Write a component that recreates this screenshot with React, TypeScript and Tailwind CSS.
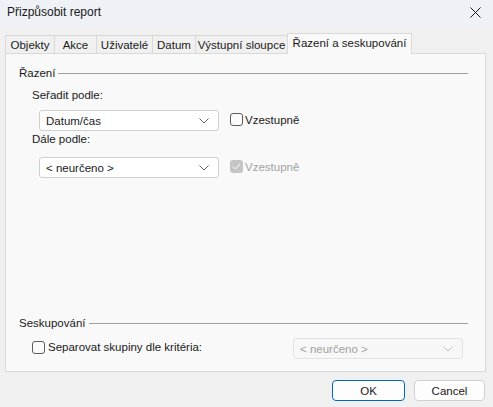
import React from "react";

const Chevron = ({ color = "#606060" }: { color?: string }) => (
  <svg width="10" height="6" viewBox="0 0 10 6" fill="none">
    <path d="M0.5 0.5 L5 5 L9.5 0.5" stroke={color} strokeWidth="1" />
  </svg>
);

const Combo = ({ text, disabled = false, w }: { text: string; disabled?: boolean; w: string }) => (
  <div
    className={`${w} h-[21px] flex items-center justify-between pl-[6px] pr-[9px] rounded-[3px] border ${
      disabled ? "border-[#e2e2e2] bg-[#f7f7f7] text-[#a2a2a2]" : "border-[#cfcfcf] bg-white text-[#1a1a1a]"
    }`}
  >
    <span className="whitespace-nowrap">{text}</span>
    <Chevron color={disabled ? "#c0c0c0" : "#606060"} />
  </div>
);

const Check = ({ checked = false, disabled = false }: { checked?: boolean; disabled?: boolean }) =>
  checked && disabled ? (
    <div className="w-[13px] h-[13px] rounded-[3px] bg-[#c4c4c4] flex items-center justify-center shrink-0">
      <svg width="9" height="7" viewBox="0 0 9 7" fill="none">
        <path d="M1 3.5 L3.5 6 L8 1" stroke="#ffffff" strokeWidth="1" />
      </svg>
    </div>
  ) : (
    <div className="w-[13px] h-[13px] rounded-[3px] border border-[#5c5c5c] bg-[#fafafa] shrink-0" />
  );

const Tab = ({ label, w }: { label: string; w: string }) => (
  <div
    className={`${w} h-[18px] border-t border-l border-[#d9d9d9] bg-[#f0f0f0] flex items-center justify-center text-[#1a1a1a] whitespace-nowrap shrink-0`}
  >
    {label}
  </div>
);

export default function App() {
  return (
    <div
      className="w-[493px] h-[407px] bg-[#f0f0f0] flex flex-col text-[11.5px] leading-[18px] text-[#1a1a1a] overflow-hidden"
      style={{ fontFamily: '"Liberation Sans", Arial, sans-serif' }}
    >
      <div className="h-[27px] bg-[#eef1f6] flex items-center justify-between pl-[7px] pr-[12px] shrink-0">
        <span className="text-[12px] -mt-[4px] whitespace-nowrap">Přizpůsobit report</span>
        <svg width="11" height="11" viewBox="0 0 11 11" fill="none" className="-mt-[3px]">
          <path d="M0.5 0.5 L10.5 10.5 M10.5 0.5 L0.5 10.5" stroke="#1a1a1a" strokeWidth="1" />
        </svg>
      </div>
      <div className="pt-[6px] pl-[5px] flex items-end relative z-10 shrink-0">
        <Tab label="Objekty" w="w-[49px]" />
        <Tab label="Akce" w="w-[42px]" />
        <Tab label="Uživatelé" w="w-[56px]" />
        <Tab label="Datum" w="w-[43px]" />
        <Tab label="Výstupní sloupce" w="w-[92px]" />
        <div className="w-[125px] h-[21px] -mb-px border-t border-l border-r border-[#d9d9d9] bg-[#f9f9f9] flex items-center justify-center pb-[2px] whitespace-nowrap shrink-0">
          Řazení a seskupování
        </div>
      </div>
      <div className="ml-[5px] w-[481px] h-[319px] border border-[#d9d9d9] bg-[#f9f9f9] flex flex-col pl-[13px] pr-[17px] pt-[10px] shrink-0">
        <div className="flex items-center gap-[3px]">
          <span>Řazení</span>
          <div className="flex-1 h-px bg-[#a0a0a0] mt-[1px]" />
        </div>
        <div className="pl-[13px] mt-[4px]">
          <div>Seřadit podle:</div>
          <div className="flex items-center mt-[6px] pl-[7px]">
            <Combo text="Datum/čas" w="w-[180px]" />
            <div className="ml-[11px] flex items-center gap-[2px] -mt-[2px]">
              <Check />
              <span>Vzestupně</span>
            </div>
          </div>
          <div className="-mt-[1px]">Dále podle:</div>
          <div className="flex items-center mt-[9px] pl-[7px]">
            <Combo text="< neurčeno >" w="w-[180px]" />
            <div className="ml-[11px] flex items-center gap-[2px] -mt-[2px] text-[#a2a2a2]">
              <Check checked disabled />
              <span>Vzestupně</span>
            </div>
          </div>
        </div>
        <div className="flex-1" />
        <div className="flex items-center gap-[3px]">
          <span>Seskupování</span>
          <div className="flex-1 h-px bg-[#a0a0a0] mt-[1px]" />
        </div>
        <div className="flex items-center justify-between pl-[13px] mt-[6px] mb-[12px] pr-[5px]">
          <div className="flex items-center gap-[3px] -mt-[3px]">
            <Check />
            <span>Separovat skupiny dle kritéria:</span>
          </div>
          <Combo text="< neurčeno >" disabled w="w-[170px]" />
        </div>
      </div>
      <div className="flex justify-end gap-[9px] pr-[8px] mt-[8px]">
        <div className="w-[73px] h-[21px] rounded-[4px] border border-[#0067c0] bg-[#fdfdfd] flex items-center justify-center">
          OK
        </div>
        <div className="w-[71px] h-[21px] rounded-[4px] border border-[#d0d0d0] bg-[#fdfdfd] flex items-center justify-center">
          Cancel
        </div>
      </div>
    </div>
  );
}
